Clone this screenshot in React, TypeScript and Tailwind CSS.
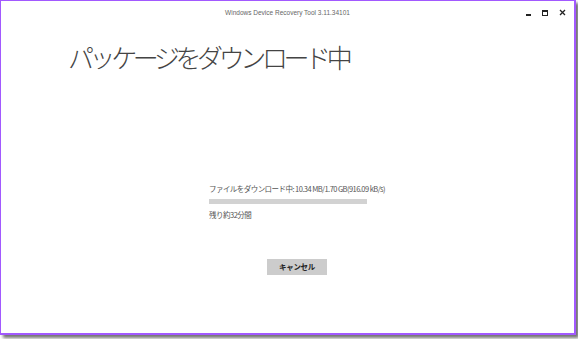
import React from "react";

const jp = { fontFamily: '"Segoe UI", "Noto Sans CJK JP", sans-serif' };

export default function App() {
  return (
    <div className="h-[339px] w-[578px] bg-white">
      {/* window */}
      <div
        className="flex h-[335px] w-[576px] flex-col border-l border-t border-r-2 border-b-2 border-[#a259ff] bg-white shadow-[3px_3px_3px_rgba(0,0,0,0.55)]"
        style={jp}
      >
        {/* title bar */}
        <div className="relative flex h-[24px] items-center justify-center">
          <span
            className="text-[6.5px] text-[#666]"
            style={{ fontFamily: '"Liberation Sans", sans-serif' }}
          >
            Windows Device Recovery Tool 3.11.34101
          </span>
          <div className="absolute right-[8px] top-[8px] flex items-center gap-[11px]">
            <div className="mt-[5px] h-[2px] w-[5px] bg-[#222]" />
            <div className="h-[6px] w-[6px] border border-t-2 border-[#222]" />
            <svg width="7" height="7" viewBox="0 0 7 7">
              <path d="M1 1L6 6M6 1L1 6" stroke="#222" strokeWidth="1.3" />
            </svg>
          </div>
        </div>

        {/* heading */}
        <h1 className="ml-[67px] mt-[12px] text-[26px] font-light leading-[40px] tracking-[-4.4px] text-[#444]">
          パッケージをダウンロード中
        </h1>

        {/* progress */}
        <div className="ml-[208px] mt-[106px] flex w-[158px] flex-col">
          <span className="whitespace-nowrap text-[7.5px] leading-[12px] tracking-[-0.55px] text-[#555]">
            ファイルをダウンロード中: 10.34 MB/1.70 GB(916.09 kB/s)
          </span>
          <div className="mt-[4px] h-[5px] w-full bg-[#d2d2d2]" />
          <span className="mt-[5px] text-[7.5px] leading-[12px] tracking-[-0.5px] text-[#555]">
            残り約32分間
          </span>
          <button className="ml-[58px] mt-[38px] h-[16px] w-[60px] bg-[#cccccc] text-[7.5px] font-bold tracking-[-0.3px] text-[#222]">
            キャンセル
          </button>
        </div>
      </div>
    </div>
  );
}
